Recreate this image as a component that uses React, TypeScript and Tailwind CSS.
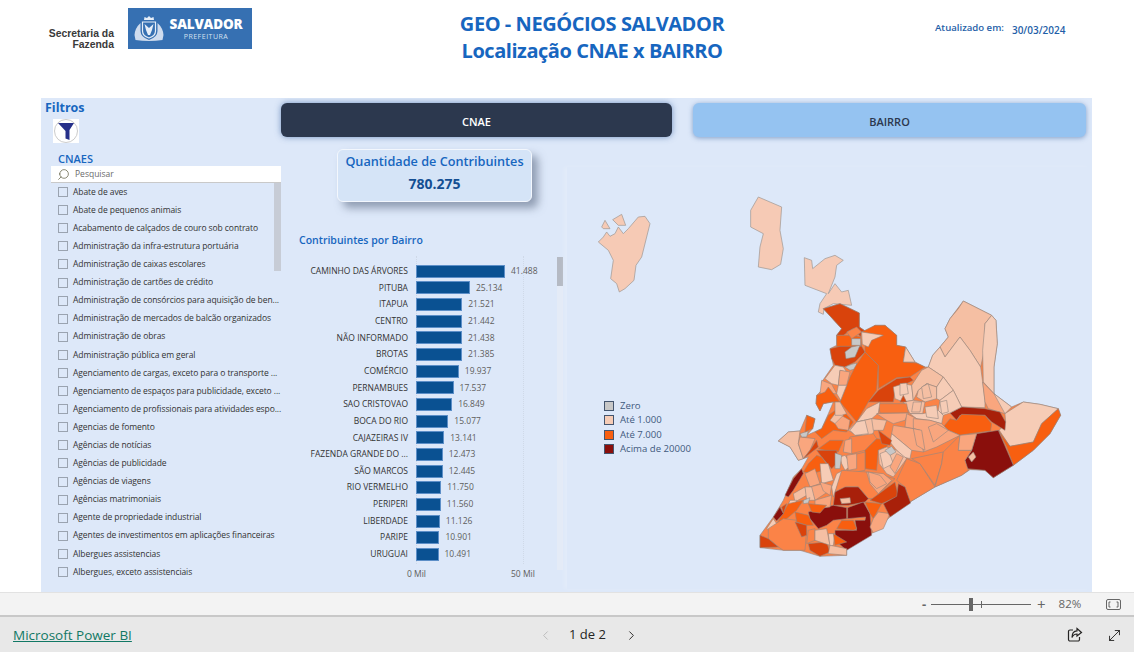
import { ChevronLeft, ChevronRight, MoveDiagonal, Search } from "lucide-react";

const I = "#f6cab5", P = "#f6ccb6", Q = "#f5bfa3", S = "#f9a67e", L = "#fb8347", O = "#f85f10", D = "#d9430c", R = "#a8200a", M = "#8a0f0c", G = "#c8c8c8";

const cnaes = [
  "Abate de aves", "Abate de pequenos animais", "Acabamento de calçados de couro sob contrato",
  "Administração da infra-estrutura portuária", "Administração de caixas escolares", "Administração de cartões de crédito",
  "Administração de consórcios para aquisição de ben...", "Administração de mercados de balcão organizados", "Administração de obras",
  "Administração pública em geral", "Agenciamento de cargas, exceto para o transporte ...", "Agenciamento de espaços para publicidade, exceto ...",
  "Agenciamento de profissionais para atividades espo...", "Agencias de fomento", "Agências de notícias", "Agências de publicidade",
  "Agências de viagens", "Agências matrimoniais", "Agente de propriedade industrial", "Agentes de investimentos em aplicações financeiras",
  "Albergues assistencias", "Albergues, exceto assistenciais",
];

const bairros: [string, number][] = [
  ["CAMINHO DAS ÁRVORES", 41488], ["PITUBA", 25134], ["ITAPUA", 21521], ["CENTRO", 21442], ["NÃO INFORMADO", 21438], ["BROTAS", 21385],
  ["COMÉRCIO", 19937], ["PERNAMBUES", 17537], ["SAO CRISTOVAO", 16849], ["BOCA DO RIO", 15077], ["CAJAZEIRAS IV", 13141],
  ["FAZENDA GRANDE DO ...", 12473], ["SÃO MARCOS", 12445], ["RIO VERMELHO", 11750], ["PERIPERI", 11560], ["LIBERDADE", 11126],
  ["PARIPE", 10901], ["URUGUAI", 10491],
];

const islands: [string, string][] = [
  [I, "115,195 130,180 140,165 150,178 165,170 175,150 190,170 205,155 235,120 255,118 270,140 260,180 245,240 228,265 222,310 195,335 178,345 170,320 152,305 160,250 145,220"],
  [I, "125,150 135,130 150,155 130,155"],
  [I, "158,128 185,112 197,145 175,145"],
  [I, "572,100 595,60 630,75 665,90 660,160 670,215 662,262 635,278 595,270 600,210 610,170 572,150"],
  [I, "733,242 755,250 758,275 795,245 825,235 850,250 830,265 825,300 805,350 825,320 845,345 865,340 875,385 820,380 792,395 790,412 775,405 780,380 800,350 735,325"],
];

const regions: [string, string][] = [
  [L, "250,65 300,50 358,78 358,120 380,135 405,115 435,115 470,145 470,175 497,180 525,225 555,240 565,240 578,205 600,180 625,150 615,125 630,95 670,42 755,85 768,100 772,170 762,240 762,320 815,360 850,345 900,352 955,365 962,385 930,440 880,490 820,535 760,572 735,550 690,548 665,565 585,600 510,645 450,690 395,740 320,785 320,805 240,808 180,790 130,790 60,782 60,745 100,690 130,640 160,570 185,545 205,510 175,520 150,480 115,462 145,435 180,432 200,385 225,395 218,425 200,445 245,425 265,380 280,345 250,350 240,372 228,350 230,325 245,310 245,285 280,235 270,185 290,175 290,145 305,125"],
  [Q, "670,42 755,85 735,110 733,190 722,240 690,190 660,150 615,210 600,180 625,150 615,125 630,95 655,65"],
  [P, "755,85 768,100 772,170 762,240 762,320 730,285 728,190 735,110"],
  [P, "660,150 690,190 722,240 728,285 735,340 735,362 665,360 640,310 610,270 565,240 578,205 600,180 615,210"],
  [S, "728,285 762,320 800,365 795,380 745,365 735,345"],
  [P, "762,320 815,360 795,380"],
  [P, "795,380 850,345 900,352 955,365 905,410 880,465 810,478 778,430 797,405"],
  [O, "955,365 962,385 930,440 880,490 820,535 800,480 775,430 810,478 880,465 905,410"],
  [R, "630,378 665,360 735,365 780,375 797,405 795,430 755,405 735,385 660,385 650,400"],
  [O, "610,420 630,395 650,400 665,382 735,385 755,410 752,432 690,440 660,445 625,430"],
  [M, "710,440 775,430 820,535 760,572 735,550 680,545 675,520 695,490"],
  [Q, "685,510 700,495 708,510 695,525"],
  [D, "250,65 300,50 358,78 358,120 380,135 365,135 362,150 340,125 310,145 290,145 305,125"],
  [O, "290,145 340,145 362,150 365,180 290,180"],
  [L, "320,135 350,120 365,135 335,155"],
  [D, "270,185 300,178 365,178 375,195 345,225 315,240 285,235 275,215"],
  [G, "315,195 335,180 360,175 345,210 318,215"],
  [G, "335,155 362,155 362,175 335,175"],
  [G, "315,240 335,232 350,228 348,245 330,250"],
  [O, "375,195 415,235 410,310 385,345 350,405 300,345 330,270 345,240"],
  [O, "365,135 405,115 435,115 470,145 470,175 497,180 490,225 530,228 555,240 510,270 470,272 415,305 415,235 375,195 375,165"],
  [P, "365,135 430,145 395,160 385,180 367,172"],
  [P, "497,180 525,225 490,225"],
  [D, "415,310 470,275 510,270 520,280 490,295 465,315 460,345 420,345 385,345"],
  [P, "285,235 310,240 320,255 300,250 295,295 275,290 255,275"],
  [S, "300,250 330,255 320,295 295,295"],
  [P, "295,295 320,295 302,340 290,320"],
  [S, "245,280 275,292 290,320 240,320"],
  [O, "230,325 255,315 265,300 300,345 275,345 250,350 240,372 228,350"],
  [P, "460,300 490,290 515,295 520,340 490,345 465,335"],
  [Q, "515,295 545,250 565,240 610,270 590,300 560,290 535,310 520,340"],
  [Q, "560,290 590,300 590,335 555,345 530,330 535,310"],
  [P, "590,300 610,270 640,310 600,340 590,335"],
  [P, "600,340 640,310 665,360 630,378 610,385 595,370"],
  [Q, "490,345 520,340 555,345 548,380 510,380 500,360"],
  [P, "548,380 595,370 610,385 605,410 570,400 530,395 510,380"],
  [P, "480,290 500,288 505,320 480,325"],
  [Q, "545,300 565,290 575,330 550,335"],
  [P, "600,345 620,340 625,375 605,380"],
  [P, "555,360 590,355 595,395 560,390"],
  [Q, "520,345 545,345 540,375 515,375"],
  [D, "480,345 490,325 500,345"],
  ["#f97a38", "415,350 500,350 505,378 420,378"],
  [P, "380,365 420,345 415,378 395,395 350,405"],
  [Q, "350,405 395,395 410,410 395,450 350,445 325,430"],
  [P, "350,405 375,400 385,440 345,445 330,430"],
  [S, "410,380 505,378 495,400 460,410 440,400"],
  [Q, "395,395 440,400 430,430 400,430"],
  [S, "500,380 530,395 520,425 495,420"],
  [S, "520,395 570,400 605,410 625,430 660,445 590,480 550,495 540,430 520,425"],
  [S, "590,410 625,430 580,465 565,420"],
  [S, "460,415 520,425 540,430 550,495 515,490 455,440"],
  [S, "520,425 545,430 555,490 530,475"],
  [P, "455,440 515,490 510,515 490,510 470,490 450,465"],
  [L, "330,450 400,440 410,455 375,490 335,500 310,490"],
  [S, "315,460 335,455 335,500 310,495"],
  [O, "375,490 410,455 450,460 440,480 415,490 410,550 375,545"],
  [D, "415,430 455,460 450,475 425,470"],
  [Q, "415,490 440,480 470,490 500,515 460,570 440,560 418,530"],
  [P, "420,500 445,490 460,530 430,545"],
  [S, "470,500 490,510 465,560 450,540"],
  [G, "435,490 455,478 468,495 450,505"],
  [O, "265,385 300,360 340,405 320,435 280,430 245,455 225,435 245,425"],
  [S, "295,380 330,400 325,430 295,425 285,410"],
  [Q, "300,360 310,385 285,410 270,400"],
  [Q, "285,345 300,345 320,380 305,385 285,385"],
  [O, "270,460 310,460 295,495 255,490 235,485"],
  [D, "230,490 290,490 295,525 275,545 245,510"],
  [Q, "115,462 145,435 180,432 175,470 190,515 175,520 150,480"],
  [S, "180,450 225,455 210,490 190,515 175,470"],
  [D, "210,490 230,460 235,480 190,515"],
  [G, "180,440 205,432 200,450 185,450"],
  [O, "200,385 225,395 218,425 195,435"],
  [P, "300,510 315,505 335,535 315,550 305,530"],
  [G, "285,498 305,505 300,545 285,545"],
  [P, "310,550 280,630 275,600 290,560"],
  [M, "185,545 190,560 160,610 145,630 135,625 160,575"],
  [O, "230,505 245,510 270,545 215,560 190,555 205,530"],
  [L, "335,505 375,495 375,550 320,560"],
  [S, "320,505 350,500 350,545 325,550"],
  [L, "305,550 380,555 465,575 400,635 385,635 355,600 320,600 285,615"],
  [S, "380,555 430,560 455,580 415,620 390,590"],
  [S, "385,555 420,565 440,590 410,605 390,585"],
  [L, "500,515 540,530 585,600 510,645 495,600 470,580"],
  [L, "515,515 610,495 605,530 585,595 540,530"],
  [L, "610,495 660,445 655,490 695,490 675,520 685,550 665,565 585,600 605,530"],
  [S, "660,445 710,440 695,490 655,490"],
  [R, "285,615 315,600 355,600 385,635 375,645 325,655 280,655"],
  [Q, "300,635 330,632 332,648 305,650"],
  [M, "205,675 280,655 320,662 320,695 280,700 260,715 235,725 210,695"],
  [M, "323,662 370,645 390,680 395,745 345,775 320,790 285,760 285,730 350,730 345,700 375,700 377,690 323,695"],
  [O, "290,725 305,700 340,700 350,725 340,730"],
  [O, "375,645 425,650 400,695 390,680"],
  [S, "415,675 450,680 430,725 400,737 390,720 400,695"],
  [D, "390,640 465,585 475,628 425,650"],
  [R, "475,590 495,600 512,648 450,690 430,650 470,628"],
  [S, "195,560 225,545 240,590 210,600"],
  [P, "240,530 265,530 280,580 245,590"],
  [S, "210,600 250,590 270,610 225,640"],
  [S, "240,585 275,595 270,625 250,612"],
  [Q, "160,620 195,600 200,625 165,645"],
  [Q, "195,600 215,600 225,640 200,640"],
  [P, "150,640 170,640 160,665 140,665"],
  [S, "225,640 275,625 270,660 225,665"],
  [O, "205,650 260,655 240,678 215,675"],
  [G, "190,640 210,632 205,648 190,650"],
  [O, "110,710 145,650 190,640 170,670 135,700"],
  [D, "125,660 140,650 130,680"],
  [M, "100,690 120,660 130,680 110,702"],
  [P, "80,725 100,695 110,710 90,730"],
  [L, "85,725 130,695 170,700 200,730 195,790 130,790 115,780 85,755"],
  [D, "60,745 85,755 115,780 60,782"],
  [O, "165,675 205,685 220,715 200,715 170,705"],
  [D, "165,705 200,715 200,745 185,750"],
  [L, "205,730 225,725 225,760 200,770"],
  [D, "205,770 260,765 270,795 240,808 210,790"],
  [Q, "225,730 260,725 270,775 225,760"],
  [P, "265,740 285,740 280,775 270,778"],
  [O, "280,740 320,765 285,775"],
  [Q, "270,775 320,785 320,805 265,800"],
];

function Crest() {
  return (
    <svg width="30" height="27" viewBox="0 0 30 27" className="shrink-0">
      <path d="M10 5 L10.5 2 L13 3 L15 1 L17 3 L19.5 2 L20 5 Z" fill="#e6eef8" />
      <path d="M8.5 7 H21.5 V16 Q21.5 21 15 23 Q8.5 21 8.5 16 Z" fill="#3670b2" stroke="#e6eef8" strokeWidth="1.2" />
      <path d="M10.5 9 L15 13 L19.5 9 L18 15 L16 20 H14 L12 15 Z" fill="#e6eef8" />
      <path d="M6.5 8 Q1 13 0.5 20 L1.5 25 Q8 26 15 26 Q22 26 28.5 25 L29.5 20 Q29 13 23.5 8 L23.5 16 Q23.5 22 15 25 Q6.5 22 6.5 16 Z" fill="#cfdcee" />
    </svg>
  );
}

function Header() {
  return (
    <header className="flex h-[98px] shrink-0 items-start bg-white">
      <div className="ml-[48px] mt-[28px] w-[66px] text-right font-['Liberation_Sans',sans-serif] text-[10.4px] font-bold leading-[11px] text-[#3a3a3a]">
        <div className="whitespace-nowrap">Secretaria da</div>
        <div>Fazenda</div>
      </div>
      <div className="ml-[14px] mt-[8px] flex h-[41px] w-[124px] items-center gap-[6px] overflow-hidden bg-[#3670b2] pl-[6px]">
        <Crest />
        <div className="flex w-[72px] flex-col items-center text-white">
          <span className="scale-y-110 whitespace-nowrap text-[13.5px] font-extrabold leading-[15px] tracking-[-0.2px]">SALVADOR</span>
          <span className="whitespace-nowrap text-[7px] leading-[9px] tracking-[0.5px] text-[#d5e1f0]">PREFEITURA</span>
        </div>
      </div>
      <div className="ml-[207px] mt-[10px] w-[266px] text-center text-[20px] font-bold leading-[27px] tracking-[-0.45px] text-[#1766bf]">
        <div className="whitespace-nowrap">GEO - NEGÓCIOS SALVADOR</div>
        <div className="whitespace-nowrap">Localização CNAE x BAIRRO</div>
      </div>
      <div className="ml-[210px] mt-[21px] flex items-start gap-[8px] font-semibold text-[#1f5fa8]">
        <span className="whitespace-nowrap text-[9.6px] leading-[14px]">Atualizado em:</span>
        <span className="mt-[2px] whitespace-nowrap text-[10px] leading-[14px]">30/03/2024</span>
      </div>
    </header>
  );
}

function Filters() {
  return (
    <aside className="flex w-[240px] shrink-0 flex-col">
      <div className="ml-[4px] mt-[1px] h-[18px] text-[12.5px] font-bold leading-[18px] text-[#1766bf]">Filtros</div>
      <div className="ml-[12px] mt-[2px] flex h-[24px] w-[26px] items-center justify-center bg-white">
        <svg width="24" height="24" viewBox="0 0 24 24">
          <circle cx="12" cy="12" r="11.5" fill="#fff" stroke="#b5b5b5" strokeWidth="0.7" />
          <path d="M4 4 H20 L15.5 11 V21 L11.5 19.5 V12 Z" fill="#26308a" />
        </svg>
      </div>
      <div className="ml-[17px] mt-[8px] h-[15px] text-[11px] font-semibold leading-[15px] text-[#1766bf]">CNAES</div>
      <div className="ml-[10px] flex h-[17px] items-center gap-[5px] border-b border-[#c9c9c9] bg-white pl-[6px] pt-[1px]">
        <Search size={13} strokeWidth={1.3} className="-scale-x-100 text-[#5b5a3c]" />
        <span className="text-[8.5px] text-[#6b6b6b]">Pesquisar</span>
      </div>
      <div className="relative ml-[17px]">
        {cnaes.map((c) => (
          <div key={c} className="flex h-[18.1px] items-center gap-[5px]">
            <span className="h-[10px] w-[10px] shrink-0 border border-[#9aa3b0]" />
            <span className="whitespace-nowrap text-[8.5px] tracking-[-0.08px] text-[#333]">{c}</span>
          </div>
        ))}
        <div className="absolute left-[216px] top-0 h-[88px] w-[7px] bg-[#c7ccd6]" />
      </div>
    </aside>
  );
}

function Chart() {
  const max = 41488;
  return (
    <div className="relative ml-[18px] mt-[31px] w-[268px]">
      <div className="h-[29px] text-[10.5px] font-semibold leading-[14px] text-[#1766bf]">Contribuintes por Bairro</div>
      <div className="relative pt-[1px]">
        <div className="absolute left-[258px] top-[-5px] h-[313px] w-[6px] bg-[#e4ebf7]" />
        <div className="absolute left-[258px] top-[-5px] h-[29px] w-[6px] bg-[#b5bac4]" />
        <div className="absolute left-[117px] top-[-6px] h-[308px] border-l border-dotted border-[#cfd9e8]" />
        <div className="absolute left-[224px] top-[-6px] h-[308px] border-l border-dotted border-[#cfd9e8]" />
        {bairros.map(([n, v]) => (
          <div key={n} className="relative flex h-[16.67px] items-center">
            <span className="w-[109px] shrink-0 whitespace-nowrap text-right text-[8.5px] text-[#333]">{n}</span>
            <span className="ml-[8px] h-[13px] border border-[#5d8fc8] bg-[#0a5192]" style={{ width: (v / max) * 89 }} />
            <span className="ml-[6px] text-[8.5px] text-[#605e5c]">{v.toLocaleString("pt-BR")}</span>
          </div>
        ))}
      </div>
      <div className="relative mt-[5px] h-[14px] text-[8.5px] text-[#605e5c]">
        <span className="absolute left-[108px]">0 Mil</span>
        <span className="absolute left-[212px]">50 Mil</span>
      </div>
    </div>
  );
}

function MapPanel() {
  return (
    <div className="relative mt-[30px] h-[422px] w-[523px] shrink-0 shadow-[-3px_0_4px_rgba(255,255,255,0.18)]">
      <svg width="523" height="422" viewBox="0 0 523 422">
        <g transform="translate(-7 10) scale(0.3333)" stroke="#a09a96" strokeWidth="2.2" strokeLinejoin="round">
          {islands.map(([f, p], i) => <polygon key={i} points={p} fill={f} />)}
        </g>
        <g transform="translate(173 120) scale(0.3333)" stroke="#93877f" strokeWidth="1.8" strokeLinejoin="round">
          {regions.map(([f, p], i) => <polygon key={i} points={p} fill={f} />)}
        </g>
      </svg>
      <div className="absolute left-[37px] top-[232px] flex flex-col text-[9.6px] leading-[14px] text-[#3f5a7d]">
        {[["Zero", G], ["Até 1.000", P], ["Até 7.000", O], ["Acima de 20000", M]].map(([t, c]) => (
          <div key={t} className="flex h-[14.3px] items-center gap-[6px]">
            <span className="h-[10px] w-[10px] border border-[#44556e]" style={{ background: c }} />
            <span className="whitespace-nowrap">{t}</span>
          </div>
        ))}
      </div>
    </div>
  );
}

function Report() {
  return (
    <main className="ml-[41px] flex h-[494px] w-[1051px] shrink-0 overflow-hidden bg-[#dde8f9]">
      <Filters />
      <div className="flex flex-col">
        <div className="mt-[5px] flex h-[34px] gap-[21px]">
          <button className="w-[391px] rounded-[6px] bg-[#2c384e] pt-[4px] text-[11px] font-semibold text-white shadow-[0_0_6px_rgba(70,110,170,0.7)]">CNAE</button>
          <button className="w-[393px] rounded-[6px] bg-[#95c3f1] pt-[4px] text-[11px] font-semibold text-[#2c384e] shadow-[0_1px_5px_rgba(70,110,170,0.6)]">BAIRRO</button>
        </div>
        <div className="flex">
          <div className="w-[286px] shrink-0">
            <div className="ml-[56px] mt-[12px] flex h-[53px] w-[195px] flex-col items-center rounded-[6px] border border-[#f3f7fd] bg-[#d5e4f7] pt-[3px] shadow-[6px_6px_9px_rgba(80,95,120,0.55)]">
              <span className="whitespace-nowrap text-[12.7px] font-semibold leading-[17px] text-[#1766bf]">Quantidade de Contribuintes</span>
              <span className="mt-[4px] text-[14px] font-bold leading-[19px] text-[#144f93]">780.275</span>
            </div>
            <Chart />
          </div>
          <MapPanel />
        </div>
      </div>
    </main>
  );
}

function Footer() {
  return (
    <>
      <div className="flex h-[23px] shrink-0 items-center border-t border-[#e2e2e2] bg-[#f3f3f3] pl-[922px] text-[#666]">
        <span className="w-[9px] text-[13px] font-bold leading-none">-</span>
        <div className="relative h-px w-[100px] bg-[#666]">
          <span className="absolute left-[38px] top-[-6px] h-[13px] w-[4px] bg-[#666]" />
          <span className="absolute left-[50px] top-[-3px] h-[7px] w-px bg-[#666]" />
        </div>
        <span className="ml-[6px] text-[15px] leading-none">+</span>
        <span className="ml-[13px] w-[26px] text-[11.5px]">82%</span>
        <svg className="ml-[21px]" width="15" height="11" viewBox="0 0 15 11" fill="none" stroke="#666" strokeWidth="1">
          <rect x="0.5" y="0.5" width="14" height="10" rx="1.5" />
          <path d="M4.5 3H3V8H4.5M10.5 3H12V8H10.5" />
        </svg>
      </div>
      <footer className="flex h-[37px] shrink-0 items-center border-t-2 border-[#c8c8c8] bg-[#e8e8e8] pt-[1px] text-[#252423]">
        <a className="ml-[13px] w-[525px] text-[13.5px] text-[#117865] underline">Microsoft Power BI</a>
        <ChevronLeft size={15} strokeWidth={1.3} className="text-[#b3b3b3]" />
        <span className="ml-[16px] w-[38px] whitespace-nowrap text-[13px] font-medium">1 de 2</span>
        <ChevronRight size={15} strokeWidth={1.5} className="ml-[17px]" />
        <svg className="ml-[428px]" width="16" height="16" viewBox="0 0 16 16" fill="none" stroke="#252423" strokeWidth="1.2">
          <path d="M6 3H3a1.5 1.5 0 0 0-1.5 1.5v8A1.5 1.5 0 0 0 3 14h8a1.5 1.5 0 0 0 1.5-1.5V10" />
          <path d="M10 1.5L14.5 5.5L10 9V7Q6.5 7 5 10.5Q5 4 10 3.8Z" />
        </svg>
        <MoveDiagonal size={17} strokeWidth={1.3} className="ml-[23px]" />
      </footer>
    </>
  );
}

export default function App() {
  return (
    <div className="flex h-[652px] w-[1134px] flex-col overflow-hidden bg-white font-['Open_Sans',sans-serif]">
      <Header />
      <Report />
      <Footer />
    </div>
  );
}
